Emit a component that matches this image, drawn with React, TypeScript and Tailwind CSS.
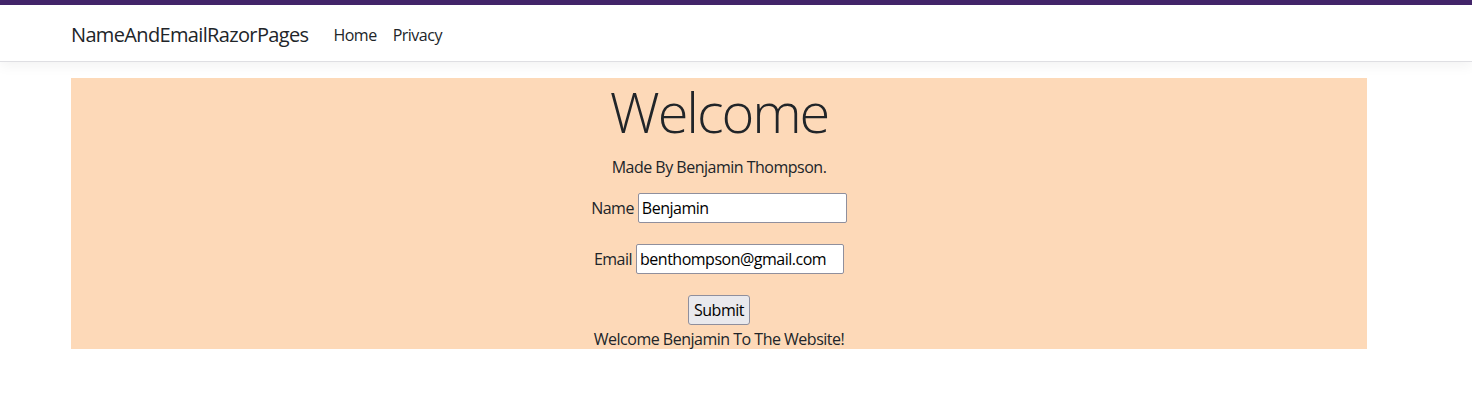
import { useState } from 'react'

const font = { fontFamily: '"Open Sans", "Noto Sans", sans-serif' }

export default function App() {
  const [name, setName] = useState('Benjamin')
  const [email, setEmail] = useState('benthompson@gmail.com')

  return (
    <div className="min-h-[405px] bg-white text-[#212529]" style={font}>
      <div className="h-[5px] bg-[#43256a]" />
      <header className="mb-4 border-b border-[#dfdfe3] bg-white shadow-[0_4px_12px_rgba(0,0,0,0.05)]">
        <nav className="ml-[71px] flex h-[56px] w-[1296px] items-center pt-[3px]">
          <a className="mr-[17px] text-[20px] tracking-[-0.65px] text-[#212529]">NameAndEmailRazorPages</a>
          <a className="px-2 text-[16px] tracking-[-0.5px] text-[#212529]">Home</a>
          <a className="px-2 text-[16px] tracking-[-0.5px] text-[#212529]">Privacy</a>
        </nav>
      </header>

      <main className="ml-[71px] w-[1296px] bg-[#fdd9b8] text-center text-[16px] tracking-[-0.5px]">
        <h1 className="mb-2 text-[56px] leading-[67px] font-light tracking-[-2.1px]">Welcome</h1>
        <p className="mb-[14px] pt-[2px] leading-6">Made By Benjamin Thompson.</p>
        <form onSubmit={(e) => e.preventDefault()}>
          <div className="flex h-[30px] items-center justify-center gap-1">
            <label>Name</label>
            <input
              value={name}
              onChange={(e) => setName(e.target.value)}
              className="h-[30px] w-[209px] rounded-[2px] border border-[#8f8f9d] bg-white px-[3px] text-[16px] tracking-[-0.5px] text-black"
            />
          </div>
          <div className="mt-[21px] flex h-[30px] items-center justify-center gap-1">
            <label>Email</label>
            <input
              value={email}
              onChange={(e) => setEmail(e.target.value)}
              className="h-[30px] w-[208px] rounded-[2px] border border-[#8f8f9d] bg-white px-[3px] text-[16px] tracking-[-0.5px] text-black"
            />
          </div>
          <div className="mt-[21px] flex justify-center">
            <button className="h-[30px] w-[62px] rounded-[3px] border border-[#8f8f9d] bg-[#e9e9ed] text-[16px] tracking-[-0.5px] text-black">
              Submit
            </button>
          </div>
        </form>
        <p className="h-6 leading-[28px]">Welcome Benjamin To The Website!</p>
      </main>
    </div>
  )
}
